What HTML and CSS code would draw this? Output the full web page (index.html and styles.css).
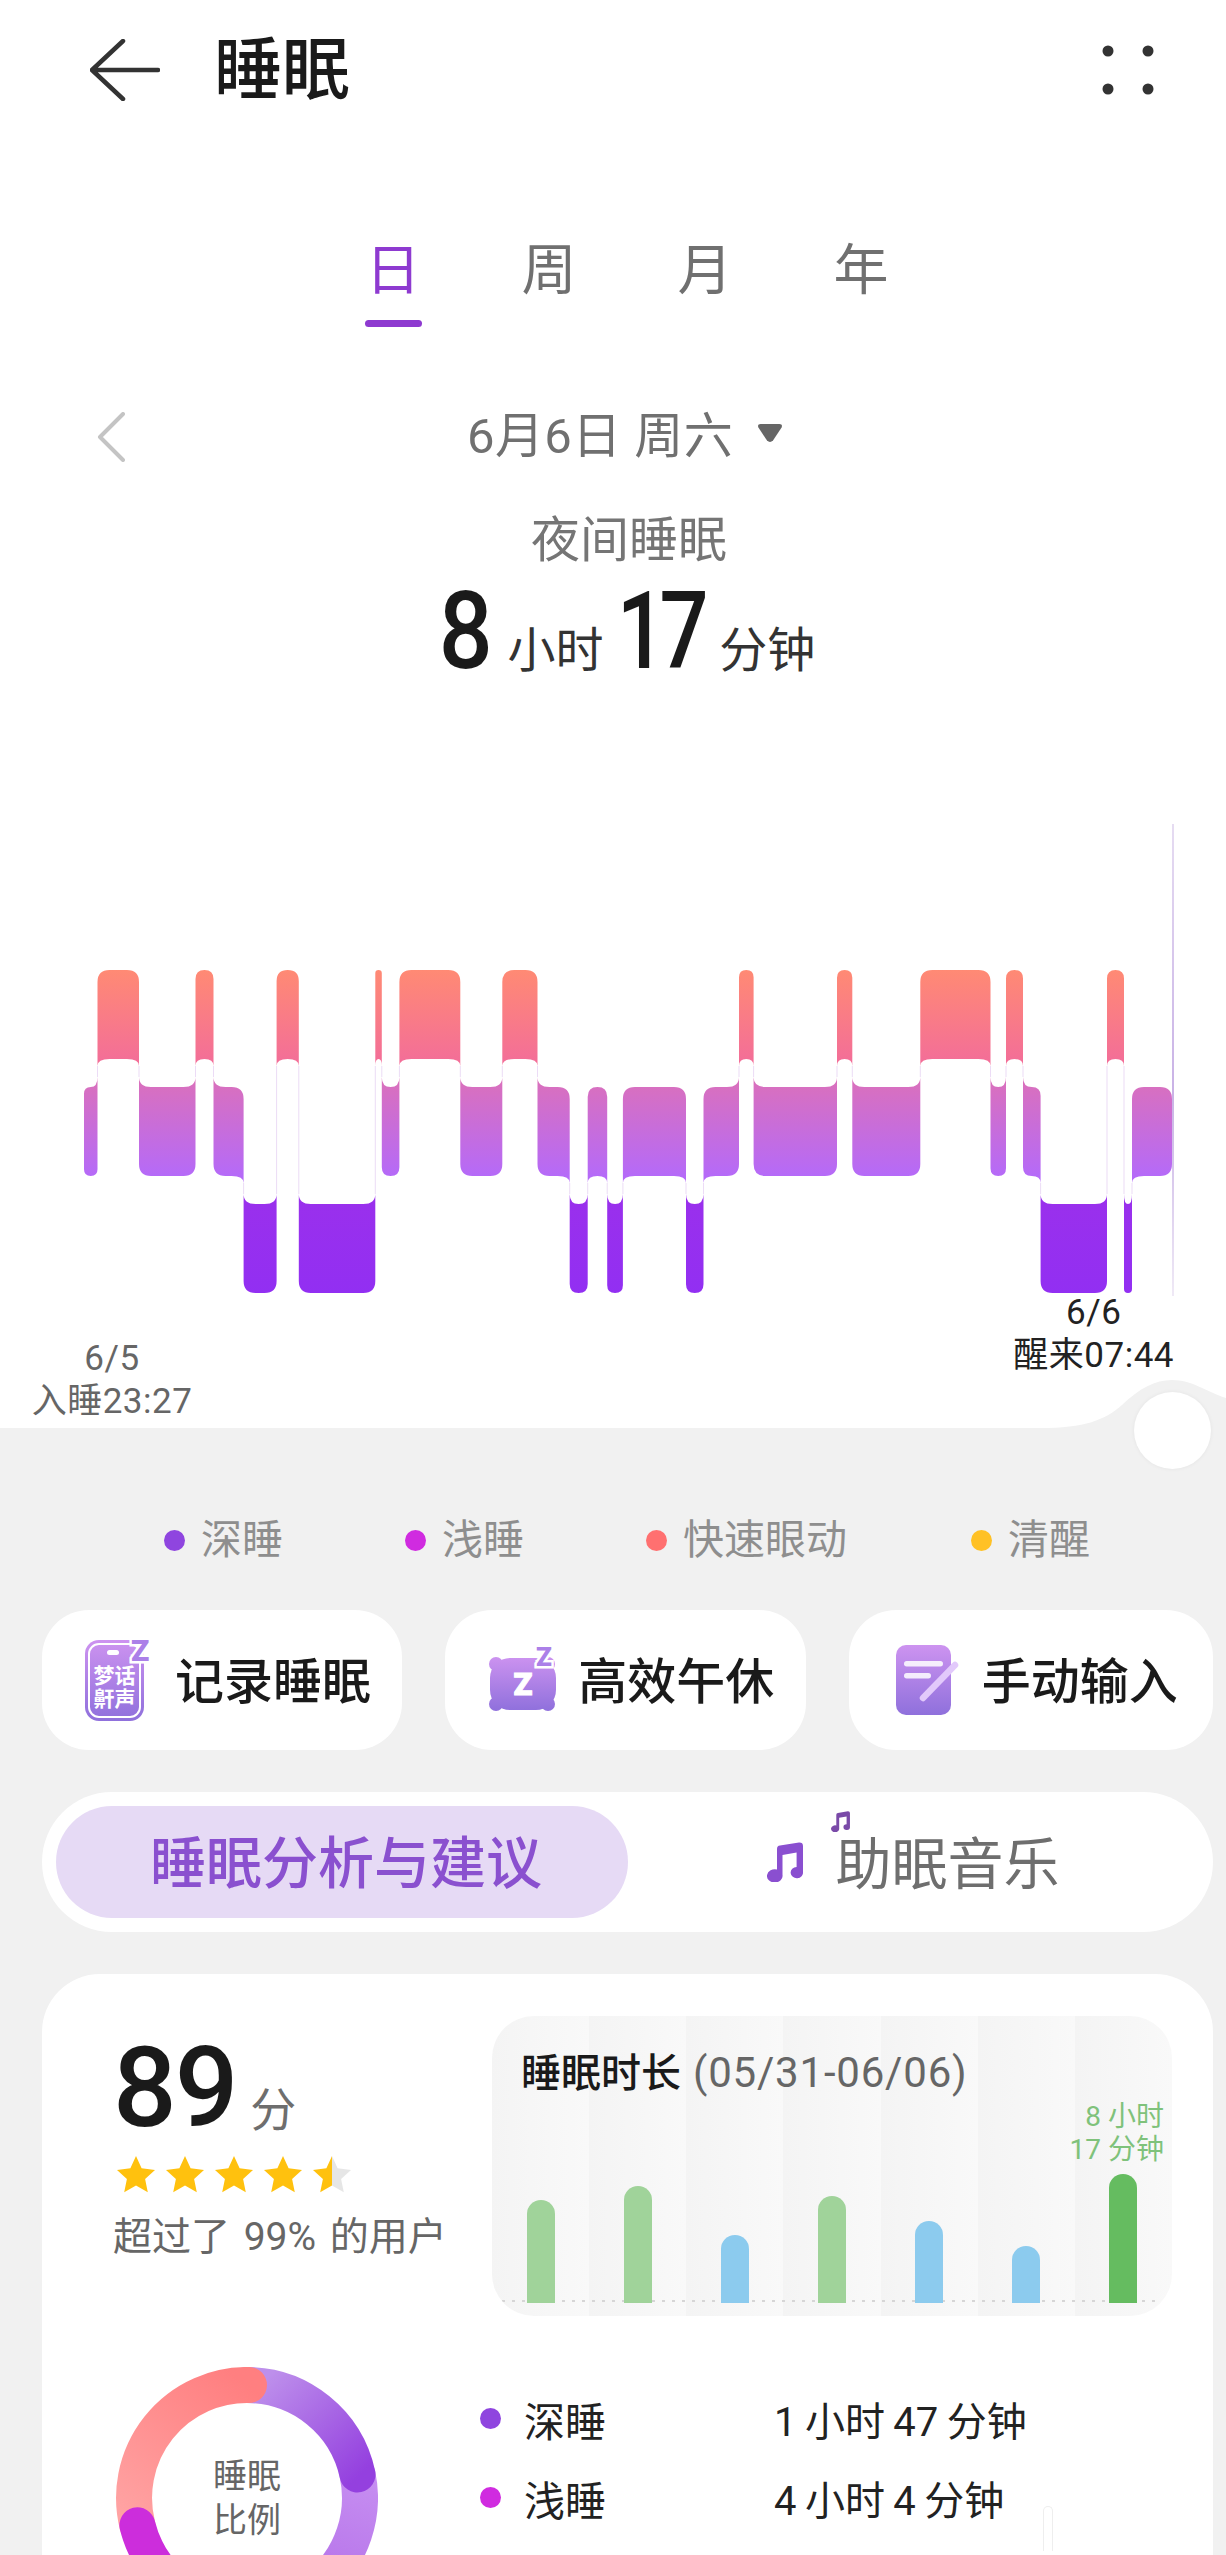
FILE: index.html
```html
<!DOCTYPE html>
<html lang="zh-CN">
<head>
    <meta charset="UTF-8">
    <meta name="viewport" content="width=device-width, initial-scale=1.0">
    <title>睡眠</title>
    <link rel="stylesheet" href="styles.css">
</head>
<body>

<!-- shared icons and gradients -->
<svg class="defs" width="0" height="0">
    <defs>
        <linearGradient id="iconFill" x1="0" y1="0" x2="0" y2="1">
            <stop offset="0" stop-color="#cd93f0"/>
            <stop offset="1" stop-color="#8f70dc"/>
        </linearGradient>
        <linearGradient id="halfStar" x1="0" y1="0" x2="1" y2="0">
            <stop offset="0.5" stop-color="#ffc10e"/>
            <stop offset="0.5" stop-color="#e6e6e6"/>
        </linearGradient>
        <symbol id="star" viewBox="0 0 38 37">
            <path d="M19 0 L24.6 12.2 L38 13.9 L28.1 23 L30.8 36.3 L19 29.6 L7.2 36.3 L9.9 23 L0 13.9 L13.4 12.2 Z"/>
        </symbol>
        <symbol id="note" viewBox="0 0 36 40">
            <path d="M10 7 Q10 4 13 3.6 L32 .6 Q36 .4 36 4 V30 A6.2 5.6 0 1 1 29.6 25 V10.5 L15.5 13 V33 A7.8 6.6 0 1 1 10 27.6 Z"/>
        </symbol>
    </defs>
</svg>

<!-- White top area -->
<div class="top">
    <div class="app-bar">
        <svg class="back" width="70" height="62" viewBox="0 0 70 62">
            <path d="M33 2 L2 31 L33 60 M2 31 H68"/>
        </svg>
        <div class="page-title">睡眠</div>
        <svg class="more" width="52" height="50" viewBox="0 0 52 50">
            <circle cx="6" cy="6" r="5.5"/>
            <circle cx="46" cy="6" r="5.5"/>
            <circle cx="6" cy="44" r="5.5"/>
            <circle cx="46" cy="44" r="5.5"/>
        </svg>
    </div>

    <div class="tabs">
        <div class="tab active">日</div>
        <div class="tab">周</div>
        <div class="tab">月</div>
        <div class="tab">年</div>
    </div>

    <div class="date-row">
        <svg class="prev" width="28" height="50" viewBox="0 0 28 50">
            <path d="M26 2 L3 25 L26 48"/>
        </svg>
        <div class="date">6月6日 周六</div>
        <svg class="caret" width="26" height="20" viewBox="0 0 26 20">
            <path d="M3.5 1 H22.5 Q26 1 24.6 4.6 L16 17.5 Q13 20.4 10 17.5 L1.4 4.6 Q0 1 3.5 1 Z"/>
        </svg>
    </div>

    <div class="sleep-label">夜间睡眠</div>
    <div class="sleep-total">
        <span class="big-num">8</span>
        <span class="unit">小时</span>
        <span class="big-num tight">17</span>
        <span class="unit">分钟</span>
    </div>

    <!-- viewBox uses page coordinates, chart.js fills the stage shapes -->
    <svg class="sleep-chart" id="sleep-chart" width="1226" height="486" viewBox="0 810 1226 486">
        <defs>
            <linearGradient id="stage0" gradientUnits="userSpaceOnUse" x1="0" y1="970" x2="0" y2="1062">
                <stop offset="0" stop-color="#ff8a74"/>
                <stop offset="1" stop-color="#f36e98"/>
            </linearGradient>
            <linearGradient id="stage1" gradientUnits="userSpaceOnUse" x1="0" y1="1080" x2="0" y2="1176">
                <stop offset="0" stop-color="#da70bc"/>
                <stop offset="1" stop-color="#b56af8"/>
            </linearGradient>
            <linearGradient id="stage2" gradientUnits="userSpaceOnUse" x1="0" y1="1196" x2="0" y2="1294">
                <stop offset="0" stop-color="#9a30ec"/>
                <stop offset="1" stop-color="#922ff2"/>
            </linearGradient>
            <linearGradient id="cursor" x1="0" y1="0" x2="0" y2="1">
                <stop offset="0" stop-color="#e6dcf2"/>
                <stop offset="0.55" stop-color="#c9b2e6"/>
                <stop offset="1" stop-color="#f2edf7"/>
            </linearGradient>
        </defs>
        <rect x="1172" y="824" width="2" height="486" fill="url(#cursor)"/>
    </svg>

    <div class="chart-labels">
        <div class="time-label start">6/5<br>入睡23:27</div>
        <div class="time-label end">6/6<br>醒来07:44</div>
    </div>

    <svg class="bump" width="186" height="50" viewBox="0 0 186 50">
        <path d="M0 48 C45 48 65 40 82 25 C100 8 115 0 132 0 C152 0 165 11 186 18 V50 H0 Z"/>
    </svg>
    <div class="knob"></div>
</div>

<!-- Stage legend -->
<div class="legend">
    <div class="legend-item"><span class="dot deep"></span>深睡</div>
    <div class="legend-item"><span class="dot light"></span>浅睡</div>
    <div class="legend-item wide"><span class="dot rem"></span>快速眼动</div>
    <div class="legend-item"><span class="dot awake"></span>清醒</div>
</div>

<!-- Action buttons -->
<div class="actions">
    <div class="action">
        <svg class="icon-record" width="67" height="81" viewBox="0 0 67 81">
            <rect x="0" y="0" width="59" height="81" rx="14" fill="url(#iconFill)"/>
            <rect x="4" y="4" width="51" height="73" rx="10" fill="none" stroke="#fff" stroke-width="2"/>
            <rect x="22" y="10" width="12" height="5" rx="2.5" fill="#fff"/>
            <text class="icon-text" x="29.5" y="43" font-size="21" text-anchor="middle">梦话</text>
            <text class="icon-text" x="29.5" y="66" font-size="21" text-anchor="middle">鼾声</text>
            <text class="icon-z" x="46" y="21" font-size="30">Z</text>
        </svg>
        <span>记录睡眠</span>
    </div>
    <div class="action">
        <svg class="icon-nap" width="70" height="63" viewBox="0 0 70 63">
            <defs>
                <linearGradient id="napFill" gradientUnits="userSpaceOnUse" x1="0" y1="7" x2="0" y2="62">
                    <stop offset="0" stop-color="#cd93f0"/>
                    <stop offset="1" stop-color="#8f70dc"/>
                </linearGradient>
            </defs>
            <g fill="url(#napFill)">
                <rect x="2" y="9" width="66" height="52" rx="20"/>
                <circle cx="8" cy="15" r="7"/>
                <circle cx="60" cy="15" r="7"/>
                <circle cx="8" cy="55" r="7"/>
                <circle cx="60" cy="55" r="7"/>
            </g>
            <text class="icon-text big" x="35" y="46" font-size="31" text-anchor="middle">Z</text>
            <text class="icon-z" x="48" y="17" font-size="26">Z</text>
        </svg>
        <span>高效午休</span>
    </div>
    <div class="action">
        <svg class="icon-input" width="62" height="70" viewBox="0 0 62 70">
            <rect x="0" y="0" width="55" height="70" rx="10" fill="url(#iconFill)"/>
            <rect x="8" y="16" width="39" height="5.5" rx="2.7" fill="#fff" opacity=".85"/>
            <rect x="8" y="28" width="27" height="5.5" rx="2.7" fill="#fff" opacity=".85"/>
            <path d="M27 53 L59 20" stroke="#e2c9fb" stroke-width="6.5" stroke-linecap="round"/>
        </svg>
        <span>手动输入</span>
    </div>
</div>

<!-- Segment switch -->
<div class="segment">
    <div class="seg-active">睡眠分析与建议</div>
    <div class="seg-music">
        <svg class="note-big" width="36" height="40"><use href="#note"/></svg>
        <span class="seg-text">
            <svg class="note-small" width="23" height="21"><use href="#note"/></svg>
            助眠音乐
        </span>
    </div>
</div>

<!-- Analysis card -->
<div class="card">
    <div class="card-row">
        <div class="score">
            <div class="score-value"><span class="score-num">89</span><span class="score-unit">分</span></div>
            <div class="stars">
                <svg width="38" height="37" fill="#ffc10e"><use href="#star"/></svg>
                <svg width="38" height="37" fill="#ffc10e"><use href="#star"/></svg>
                <svg width="38" height="37" fill="#ffc10e"><use href="#star"/></svg>
                <svg width="38" height="37" fill="#ffc10e"><use href="#star"/></svg>
                <svg width="38" height="37" fill="url(#halfStar)"><use href="#star"/></svg>
            </div>
            <div class="score-note">超过了 99% 的用户</div>
        </div>

        <div class="duration">
            <div class="day"><div class="bar green" style="height:103px"></div></div>
            <div class="day"><div class="bar green" style="height:117px"></div></div>
            <div class="day"><div class="bar blue" style="height:68px"></div></div>
            <div class="day"><div class="bar green" style="height:107px"></div></div>
            <div class="day"><div class="bar blue" style="height:82px"></div></div>
            <div class="day"><div class="bar blue" style="height:57px"></div></div>
            <div class="day"><div class="bar today" style="height:129px"></div></div>
            <div class="baseline"></div>
            <div class="duration-title">睡眠时长 <span>(05/31-06/06)</span></div>
            <div class="today-label">8 小时<br>17 分钟</div>
        </div>
    </div>

    <div class="card-row ratio">
        <div class="donut">
            <svg width="262" height="262" viewBox="4 4 262 262">
                <defs>
                    <linearGradient id="arcDeep" gradientUnits="userSpaceOnUse" x1="150" y1="20" x2="245" y2="115">
                        <stop offset="0" stop-color="#bd8feb"/>
                        <stop offset="1" stop-color="#9440df"/>
                    </linearGradient>
                    <linearGradient id="arcLight" gradientUnits="userSpaceOnUse" x1="245" y1="110" x2="200" y2="240">
                        <stop offset="0" stop-color="#c68ef1"/>
                        <stop offset="1" stop-color="#b36ee8"/>
                    </linearGradient>
                    <linearGradient id="arcRem" gradientUnits="userSpaceOnUse" x1="135" y1="22" x2="26" y2="166">
                        <stop offset="0" stop-color="#ff7f80"/>
                        <stop offset="1" stop-color="#ffa3a3"/>
                    </linearGradient>
                </defs>
                <g fill="none" stroke-width="36" stroke-linecap="round">
                    <path d="M245.5 111.5 A113 113 0 0 1 96.4 241.2" stroke="url(#arcLight)"/>
                    <path d="M135 22 A113 113 0 0 1 245.5 111.5" stroke="url(#arcDeep)"/>
                    <path d="M25.4 162.3 A113 113 0 0 1 137 22" stroke="url(#arcRem)"/>
                    <path d="M72 229 A113 113 0 0 1 25.4 162.3" stroke="#cc2ddc"/>
                </g>
            </svg>
            <div class="donut-text">睡眠<br>比例</div>
        </div>

        <div class="stage-list">
            <span class="dot deep"></span><span>深睡</span><span class="stage-time">1 小时 47 分钟</span>
            <span class="dot light"></span><span>浅睡</span><span class="stage-time">4 小时 4 分钟</span>
        </div>
    </div>

    <div class="ghost-pill"></div>
</div>

<script src="chart.js"></script>
</body>
</html>
```

FILE: styles.css
```css
* {
    box-sizing: border-box;
}
html, body {
    margin: 0;
    height: 2555px;
    overflow: hidden;
}
body {
    width: 1226px;
    background-color: #f1f1f1;
    font-family: Roboto, "Noto Sans CJK SC", sans-serif;
    color: #1a1a1a;
}
.defs {
    position: absolute;
}

/* top area */
.top {
    position: relative;
    height: 1428px;
    background-color: #fff;
}
.app-bar {
    position: relative;
    display: flex;
    align-items: center;
    height: 140px;
    padding-left: 90px;
}
.back {
    fill: none;
    stroke: #333;
    stroke-width: 4.5;
    stroke-linecap: round;
    stroke-linejoin: round;
}
.page-title {
    margin-left: 54px;
    padding-top: 2px;
    font-size: 68px;
    font-weight: 500;
    line-height: 80px;
}
.more {
    margin-left: auto;
    margin-right: 72px;
    fill: #333;
}
.tabs {
    display: flex;
    margin-top: 100px;
    margin-left: 315px;
}
.tab {
    position: relative;
    width: 156px;
    height: 87px;
    font-size: 55px;
    line-height: 60px;
    text-align: center;
    color: #707070;
}
.tab.active {
    color: #8e3ad0;
}
.tab.active::after {
    content: "";
    display: block;
    width: 57px;
    height: 7px;
    margin: 20px auto 0;
    border-radius: 4px;
    background-color: #8e3ad0;
}
.date-row {
    display: flex;
    align-items: center;
    height: 60px;
    margin-top: 80px;
    padding-left: 97px;
}
.prev {
    fill: none;
    stroke: #c4c4c4;
    stroke-width: 4;
    stroke-linecap: round;
    stroke-linejoin: round;
}
.date {
    margin-left: 342px;
    font-size: 49px;
    letter-spacing: .4px;
    line-height: 60px;
    color: #707070;
}
.caret {
    margin-left: 24px;
    margin-bottom: 8px;
    fill: #666;
}
.sleep-label {
    width: 1258px;
    margin-top: 44px;
    font-size: 49px;
    line-height: 60px;
    text-align: center;
    color: #757575;
}
.sleep-total {
    display: flex;
    align-items: flex-end;
    height: 120px;
    padding-left: 436px;
}
.big-num {
    display: inline-block;
    margin: 0 -1px;
    font-size: 108px;
    font-weight: 500;
    line-height: 120px;
    transform: scaleX(.88);
}
.big-num.tight {
    margin: 0 -6px 0 -5px;
    letter-spacing: -8px;
    transform: scaleX(.8);
}
.unit {
    margin: 0 8px 10px 12px;
    font-size: 48px;
    line-height: 60px;
    color: #333;
}
.sleep-chart {
    display: block;
    margin-top: 119px;
}
.chart-labels {
    display: flex;
    justify-content: space-between;
    align-items: flex-start;
    margin-top: -5px;
    padding: 0 52px 0 31px;
}
.time-label {
    font-size: 35px;
    letter-spacing: .5px;
    line-height: 43px;
    text-align: center;
    white-space: nowrap;
}
.time-label.start {
    margin-top: 46px;
    width: 162px;
    color: #666;
}
.time-label.end {
    color: #222;
}
.bump {
    position: absolute;
    right: 0;
    bottom: -2px;
    fill: #f1f1f1;
}
.knob {
    position: absolute;
    left: 1134px;
    top: 1392px;
    width: 77px;
    height: 77px;
    border-radius: 50%;
    background-color: #fff;
    box-shadow: 0 0 4px rgba(0, 0, 0, 0.06);
}

/* legend */
.legend {
    display: flex;
    padding: 82px 0 0 164px;
}
.legend-item {
    display: flex;
    align-items: center;
    width: 241px;
    gap: 16px;
    font-size: 41px;
    line-height: 60px;
    color: #8e8e8e;
}
.legend-item.wide {
    width: 325px;
}
.dot {
    display: inline-block;
    width: 21px;
    height: 21px;
    border-radius: 50%;
}
.dot.deep {
    background-color: #8f45df;
}
.dot.light {
    background-color: #d02be0;
}
.dot.rem {
    background-color: #ff7070;
}
.dot.awake {
    background-color: #ffc125;
}

/* action buttons */
.actions {
    display: flex;
    gap: 43px;
    margin-top: 40px;
    padding: 0 13px 0 42px;
}
.action {
    flex: 1;
    display: flex;
    align-items: center;
    height: 140px;
    padding-left: 43px;
    gap: 23px;
    border-radius: 47px;
    background-color: #fff;
    font-size: 49px;
    font-weight: 500;
    white-space: nowrap;
}
.action span {
    padding-bottom: 5px;
}
.action svg {
    overflow: visible;
}
.action:nth-child(2) {
    gap: 20px;
}
.action:last-child {
    padding-left: 47px;
    gap: 24px;
}
.icon-text {
    font-family: "Noto Sans CJK SC", sans-serif;
    font-weight: 700;
    fill: #fff;
}
.icon-text.big {
    font-family: Roboto, sans-serif;
    font-weight: 900;
    stroke: #fff;
    stroke-width: 1;
}
.icon-z {
    font-family: Roboto, sans-serif;
    font-weight: 900;
    fill: #ab80e8;
    stroke: #fff;
    stroke-width: 5;
    paint-order: stroke;
}

/* segment switch */
.segment {
    display: flex;
    align-items: center;
    height: 140px;
    margin: 42px 13px 0 42px;
    padding-left: 14px;
    border-radius: 70px;
    background-color: #fff;
    font-size: 56px;
}
.seg-active {
    width: 572px;
    height: 112px;
    padding-left: 8px;
    border-radius: 56px;
    background-color: #e6daf5;
    font-weight: 500;
    line-height: 116px;
    text-align: center;
    color: #8a50cf;
}
.seg-music {
    flex: 1;
    display: flex;
    align-items: center;
    justify-content: center;
    gap: 33px;
    padding-right: 15px;
    color: #6e6e6e;
}
.note-big {
    fill: #8a4fd0;
}
.seg-text {
    position: relative;
    padding-bottom: 6px;
}
.note-small {
    position: absolute;
    left: -7px;
    top: -8px;
    fill: #7a4aa8;
}

/* card */
.card {
    position: relative;
    height: 700px;
    margin: 42px 13px 0 42px;
    padding: 42px 41px 0 71px;
    border-radius: 58px 58px 0 0;
    background-color: #fff;
}
.card-row {
    display: flex;
}
.score {
    width: 379px;
}
.score-value {
    display: flex;
    align-items: baseline;
    height: 128px;
    line-height: 144px;
}
.score-num {
    font-size: 112px;
    font-weight: 500;
    letter-spacing: -2px;
}
.score-unit {
    margin-left: 14px;
    font-size: 46px;
    color: #6e6e6e;
}
.stars {
    display: flex;
    gap: 11px;
    margin: 12px 0 0 4px;
}
.stars svg {
    display: block;
}
.score-note {
    margin-top: 18px;
    font-size: 39px;
    word-spacing: 4px;
    line-height: 52px;
    color: #666;
    white-space: nowrap;
}
.duration {
    position: relative;
    display: flex;
    width: 680px;
    height: 300px;
    border-radius: 42px;
    overflow: hidden;
}
.day {
    flex: 1;
    display: flex;
    align-items: flex-end;
    justify-content: center;
    padding-bottom: 13px;
    background: linear-gradient(90deg, #f4f4f4, #f9f9f9);
}
.bar {
    position: relative;
    z-index: 1;
    width: 28px;
    border-radius: 14px 14px 0 0;
}
.bar.green {
    background-color: #a0d39a;
}
.bar.blue {
    background-color: #8ccbee;
}
.bar.today {
    background-color: #65bc60;
}
.baseline {
    position: absolute;
    left: 10px;
    right: 10px;
    bottom: 14px;
    height: 2px;
    background: repeating-linear-gradient(90deg, #d6d6d6 0, #d6d6d6 3px, transparent 3px, transparent 10px);
}
.duration-title {
    position: absolute;
    left: 29px;
    top: 29px;
    font-size: 40px;
    font-weight: 500;
    line-height: 56px;
    white-space: nowrap;
}
.duration-title span {
    margin-left: 2px;
    font-size: 42px;
    font-weight: 400;
    letter-spacing: .8px;
    color: #666;
}
.today-label {
    position: absolute;
    right: 8px;
    top: 84px;
    font-size: 28px;
    line-height: 33px;
    text-align: right;
    color: #7fc27b;
}
.ratio {
    margin-top: 51px;
}
.donut {
    position: relative;
    width: 262px;
    height: 262px;
    margin-left: 3px;
}
.donut svg {
    display: block;
}
.donut-text {
    position: absolute;
    left: 0;
    right: 0;
    top: 87px;
    font-size: 34px;
    line-height: 44px;
    text-align: center;
    color: #666;
}
.stage-list {
    display: grid;
    grid-template-columns: 44px 250px auto;
    grid-auto-rows: 79px;
    align-items: center;
    margin-left: 102px;
    padding-top: 12px;
    font-size: 41px;
    color: #222;
}
.stage-time {
    font-size: 40px;
    word-spacing: -1.5px;
}
.ghost-pill {
    position: absolute;
    left: 1001px;
    top: 532px;
    width: 10px;
    height: 45px;
    border: 1px solid #eee;
    border-bottom: none;
    border-radius: 5px 5px 0 0;
}
```

FILE: chart.js
```js
// sleep stages: level 0 = rem, 1 = light, 2 = deep
const bands = [
    { top: 970, bottom: 1059 },
    { top: 1087, bottom: 1176 },
    { top: 1204, bottom: 1293 }
];

const startX = 84;
const stages = [
    [97.5, 1], [139, 0], [195.5, 1], [213.5, 0], [243.6, 1], [276.6, 2],
    [298.8, 0], [375.3, 2], [381.8, 0], [399.4, 1], [460.3, 0], [502.3, 1],
    [537.5, 0], [569.7, 1], [587.7, 2], [607.2, 1], [622.9, 2], [686, 1],
    [703.5, 2], [739, 1], [753.6, 0], [837, 1], [852.3, 0], [920.3, 1],
    [990.5, 0], [1006, 1], [1023, 0], [1040.6, 1], [1107, 2], [1124, 0],
    [1132, 2], [1172, 1]
];

const svg = document.getElementById('sleep-chart');
const FLARE_UP = 10;
const FLARE_DOWN = 7;

function addShape(tag, attrs) {
    const el = document.createElementNS('http://www.w3.org/2000/svg', tag);
    Object.keys(attrs).forEach((key) => el.setAttribute(key, attrs[key]));
    svg.appendChild(el);
}

function stagePath(a, b, level, prev, next) {
    const { top, bottom } = bands[level];
    const r = Math.min(12, (b - a) / 2);
    let d = '';

    // top edge, flares up where the neighbour sits higher
    d += prev !== null && prev < level
        ? `M${a} ${top - FLARE_UP} Q${a} ${top} ${a + r} ${top}`
        : `M${a} ${top + r} Q${a} ${top} ${a + r} ${top}`;
    d += ` L${b - r} ${top}`;
    d += next !== null && next < level
        ? ` Q${b} ${top} ${b} ${top - FLARE_UP}`
        : ` Q${b} ${top} ${b} ${top + r}`;

    // bottom edge, flares down where the neighbour sits lower
    d += next !== null && next > level
        ? ` L${b} ${bottom + FLARE_DOWN} Q${b} ${bottom} ${b - r} ${bottom}`
        : ` L${b} ${bottom - r} Q${b} ${bottom} ${b - r} ${bottom}`;
    d += ` L${a + r} ${bottom}`;
    d += prev !== null && prev > level
        ? ` Q${a} ${bottom} ${a} ${bottom + FLARE_DOWN}`
        : ` Q${a} ${bottom} ${a} ${bottom - r}`;

    return d + ' Z';
}

let x = startX;
stages.forEach(([end, level], i) => {
    const prev = i > 0 ? stages[i - 1][1] : null;
    const next = i < stages.length - 1 ? stages[i + 1][1] : null;

    // thin connector between two neighbouring stages
    if (next !== null) {
        const upper = Math.min(level, next);
        const lower = Math.max(level, next);
        addShape('rect', {
            x: end - 0.5,
            y: bands[upper].bottom + FLARE_DOWN,
            width: 1,
            height: bands[lower].top - bands[upper].bottom - FLARE_DOWN - FLARE_UP,
            fill: '#ecdcf6'
        });
    }

    addShape('path', { d: stagePath(x, end, level, prev, next), fill: `url(#stage${level})` });
    x = end;
});
```
